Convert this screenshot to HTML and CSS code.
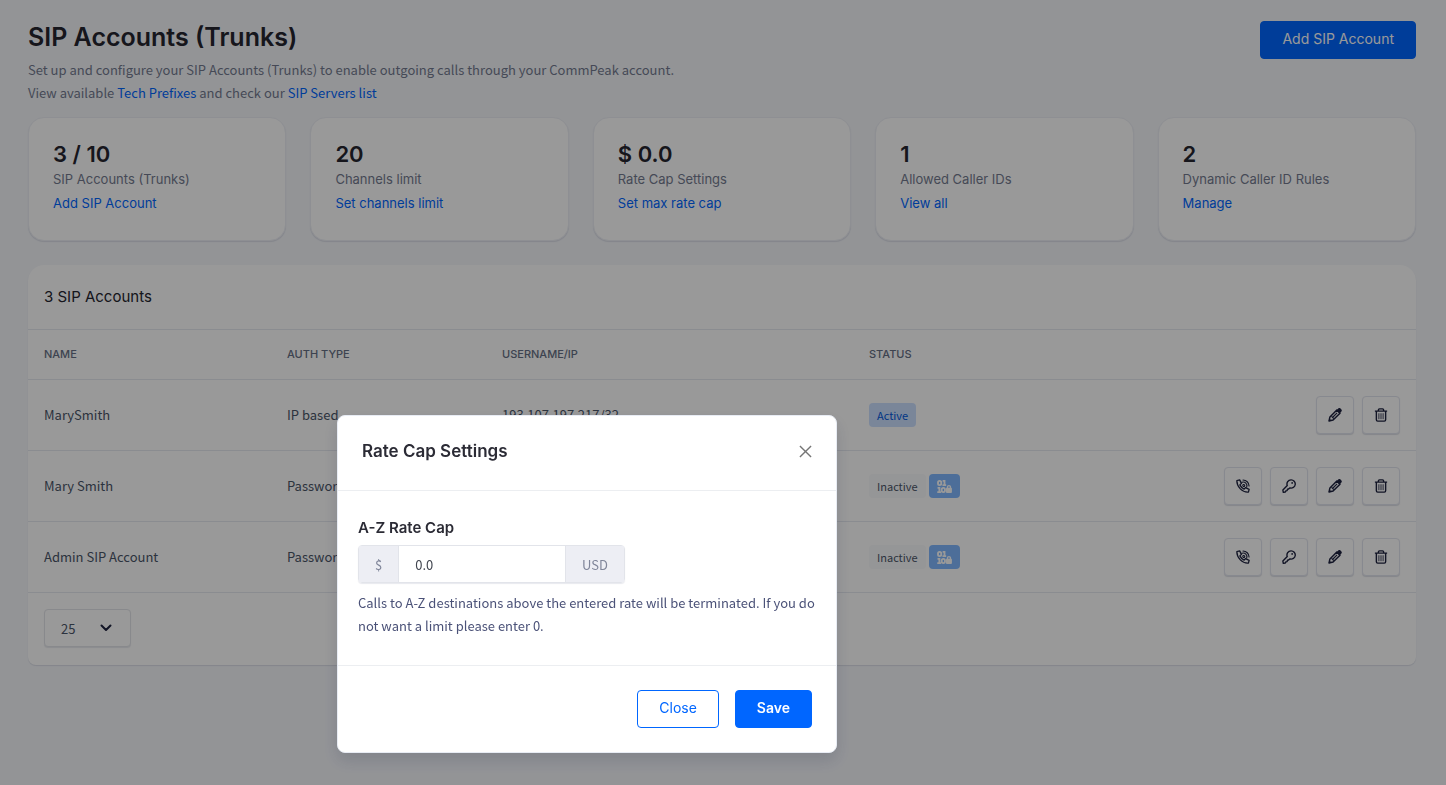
FILE: index.html
```html
<!DOCTYPE html>
<html lang="en">
  <head>
    <meta charset="UTF-8" />
    <meta name="viewport" content="width=device-width, initial-scale=1.0" />
    <title>SIP Accounts (Trunks)</title>
    <link rel="stylesheet" href="styles.css" />
  </head>
  <body>
    <!-- icons -->
    <svg class="sprite" aria-hidden="true">
      <symbol id="icon-pencil" viewBox="0 0 16 16">
        <path d="M1.2 14.8l1-4.6 7.9-7.9 3.6 3.6-7.9 7.9z" fill="none" stroke="currentColor" stroke-width="1.7" stroke-linejoin="round" />
        <path d="M9.6 2.6L11.2 1a2.4 2.4 0 0 1 3.6 0 2.4 2.4 0 0 1 0 3.6l-1.6 1.8z" fill="currentColor" />
        <path d="M.8 15.2l.8-3.2 2.4 2.4z" fill="currentColor" />
        <path d="M5.4 10.6l5-5M4 9.5l2.6 2.6" fill="none" stroke="currentColor" stroke-width="1.3" />
      </symbol>
      <symbol id="icon-trash" viewBox="0 0 16 16">
        <path d="M1 3.6h14M5 3.4V2.2C5 1.5 5.5 1 6.2 1h3.6c.7 0 1.2.5 1.2 1.2v1.2M2.7 3.8v9.7c0 .9.6 1.5 1.5 1.5h7.6c.9 0 1.5-.6 1.5-1.5V3.800" fill="none" stroke="currentColor" stroke-width="1.6" />
        <path d="M5.6 6v6.8M8 6v6.8M10.4 6v6.8" stroke="currentColor" stroke-width="1" />
      </symbol>
      <symbol id="icon-key" viewBox="0 0 16 16">
        <path d="M10.3 1a4.7 4.7 0 1 1-1.2 9.2l-1.6 1.2-1.200.3-.5 1.500-1.400.4-.6 1.300-2.300.3L1 12.600l5-5.200A4.700 4.700 0 0 1 10.300 1z" fill="none" stroke="currentColor" stroke-width="1.6" stroke-linejoin="round" />
        <circle cx="11.6" cy="4.500" r="1" fill="currentColor" />
      </symbol>
      <symbol id="icon-phone" viewBox="0 0 16 16">
        <path d="M1 1.8L4.2 1l2 4-1.8 1.700a11 11 0 0 0 4.900 4.900l1.700-1.800 4 2-.8 3.200C7.400 15.600.7 9 1 1.800z" fill="none" stroke="currentColor" stroke-width="1.5" stroke-linejoin="round" />
        <path d="M8 1.100a7 7 0 0 1 6.900 6.900M6.900 3.800c3-1.300 6.800 2 5.300 5.300M8.500 8.500c-1.600-.9-.4-3 1-2 1.100.8.200 2.500-1 2z" fill="none" stroke="currentColor" stroke-width="1.3" stroke-linecap="round" />
      </symbol>
      <symbol id="icon-binary" viewBox="0 0 16 14">
        <g fill="none" stroke="currentColor" stroke-width="2">
          <rect x="1" y="1" width="3.5" height="4.5" rx="1.7" />
          <rect x="5" y="8.5" width="3.5" height="4.500" rx="1.7" />
          <path d="M6 1h2v4M5.800 5.500h4M.5 8.500h2v4M.2 13h4" />
          <path d="M11.200 9V7.600a1.600 1.600 0 0 1 3.200 0V9" stroke-width="1.500" />
        </g>
        <rect x="9.600" y="8.300" width="6.400" height="5.700" rx="1" fill="currentColor" />
      </symbol>
      <symbol id="icon-close" viewBox="0 0 14 14">
        <path d="M1 1l12 12M13 1L1 13" stroke="currentColor" stroke-width="1.5" />
      </symbol>
      <symbol id="icon-chevron" viewBox="0 0 12 8">
        <path d="M1.5 1.5L6 6l4.5-4.5" fill="none" stroke="currentColor" stroke-width="2" stroke-linecap="round" stroke-linejoin="round" />
      </symbol>
    </svg>

    <main class="page">
      <header class="page-header">
        <div>
          <h1 class="page-title">SIP Accounts (Trunks)</h1>
          <p class="page-text">Set up and configure your SIP Accounts (Trunks) to enable outgoing calls through your CommPeak account.</p>
          <p class="page-text">View available <a href="#">Tech Prefixes</a> and check our <a href="#">SIP Servers list</a></p>
        </div>
        <button type="button" class="btn btn-primary">Add SIP Account</button>
      </header>

      <section class="stats">
        <div class="stat">
          <div class="stat-value">3 / 10</div>
          <div class="stat-label">SIP Accounts (Trunks)</div>
          <a href="#" class="stat-link">Add SIP Account</a>
        </div>
        <div class="stat">
          <div class="stat-value">20</div>
          <div class="stat-label">Channels limit</div>
          <a href="#" class="stat-link">Set channels limit</a>
        </div>
        <div class="stat">
          <div class="stat-value">$ 0.0</div>
          <div class="stat-label">Rate Cap Settings</div>
          <a href="#" class="stat-link">Set max rate cap</a>
        </div>
        <div class="stat">
          <div class="stat-value">1</div>
          <div class="stat-label">Allowed Caller IDs</div>
          <a href="#" class="stat-link">View all</a>
        </div>
        <div class="stat">
          <div class="stat-value">2</div>
          <div class="stat-label">Dynamic Caller ID Rules</div>
          <a href="#" class="stat-link">Manage</a>
        </div>
      </section>

      <section class="panel">
        <h2 class="panel-title">3 SIP Accounts</h2>
        <table class="accounts">
          <thead>
            <tr>
              <th class="col-name">NAME</th>
              <th class="col-auth">AUTH TYPE</th>
              <th class="col-user">USERNAME/IP</th>
              <th>STATUS</th>
              <th></th>
            </tr>
          </thead>
          <tbody>
            <tr>
              <td>MarySmith</td>
              <td>IP based</td>
              <td>193.107.197.217/32</td>
              <td>
                <div class="badges">
                  <span class="badge badge-active">Active</span>
                </div>
              </td>
              <td>
                <div class="actions">
                  <button type="button" class="icon-btn" aria-label="Edit"><svg><use href="#icon-pencil" /></svg></button>
                  <button type="button" class="icon-btn" aria-label="Delete"><svg><use href="#icon-trash" /></svg></button>
                </div>
              </td>
            </tr>
            <tr>
              <td>Mary Smith</td>
              <td>Password</td>
              <td></td>
              <td>
                <div class="badges">
                  <span class="badge">Inactive</span>
                  <span class="badge badge-binary"><svg><use href="#icon-binary" /></svg></span>
                </div>
              </td>
              <td>
                <div class="actions">
                  <button type="button" class="icon-btn" aria-label="Call"><svg><use href="#icon-phone" /></svg></button>
                  <button type="button" class="icon-btn" aria-label="Password"><svg><use href="#icon-key" /></svg></button>
                  <button type="button" class="icon-btn" aria-label="Edit"><svg><use href="#icon-pencil" /></svg></button>
                  <button type="button" class="icon-btn" aria-label="Delete"><svg><use href="#icon-trash" /></svg></button>
                </div>
              </td>
            </tr>
            <tr>
              <td>Admin SIP Account</td>
              <td>Password</td>
              <td></td>
              <td>
                <div class="badges">
                  <span class="badge">Inactive</span>
                  <span class="badge badge-binary"><svg><use href="#icon-binary" /></svg></span>
                </div>
              </td>
              <td>
                <div class="actions">
                  <button type="button" class="icon-btn" aria-label="Call"><svg><use href="#icon-phone" /></svg></button>
                  <button type="button" class="icon-btn" aria-label="Password"><svg><use href="#icon-key" /></svg></button>
                  <button type="button" class="icon-btn" aria-label="Edit"><svg><use href="#icon-pencil" /></svg></button>
                  <button type="button" class="icon-btn" aria-label="Delete"><svg><use href="#icon-trash" /></svg></button>
                </div>
              </td>
            </tr>
          </tbody>
        </table>
        <div class="panel-footer">
          <div class="page-size">
            <select aria-label="Rows per page">
              <option>25</option>
              <option>50</option>
            </select>
            <svg class="chevron"><use href="#icon-chevron" /></svg>
          </div>
        </div>
      </section>
    </main>

    <div class="backdrop"></div>

    <form class="modal" role="dialog" aria-labelledby="modalTitle">
      <div class="modal-header">
        <h3 class="modal-title" id="modalTitle">Rate Cap Settings</h3>
        <button type="button" class="modal-close" aria-label="Close"><svg><use href="#icon-close" /></svg></button>
      </div>
      <div class="modal-body">
        <label class="field-label" for="rateCap">A-Z Rate Cap</label>
        <div class="input-group">
          <span class="addon">$</span>
          <input type="text" id="rateCap" name="rateCap" value="0.0" />
          <span class="addon addon-end">USD</span>
        </div>
        <p class="help">Calls to A-Z destinations above the entered rate will be terminated. If you do not want a limit please enter 0.</p>
      </div>
      <div class="modal-footer">
        <button type="button" class="btn btn-outline">Close</button>
        <button type="submit" class="btn btn-primary btn-save">Save</button>
      </div>
    </form>
  </body>
</html>
```
FILE: styles.css
```css
* {
  box-sizing: border-box;
}

body {
  margin: 0;
  font-family: "Noto Sans CJK SC", "Open Sans", sans-serif;
  font-size: 13px;
  line-height: 23px;
  color: #4a5568;
  background-color: #f5f7fb;
}

h1, h2, h3, p {
  margin: 0;
}

a {
  color: #0066ff;
  text-decoration: none;
}

.sprite {
  display: none;
}

.page {
  padding: 18px 30px 18px 28px;
}

.page-header {
  display: flex;
  justify-content: space-between;
  align-items: flex-start;
  padding-top: 3px;
  margin-bottom: 13px;
}

.page-title {
  font-family: Inter, sans-serif;
  font-size: 25px;
  font-weight: 600;
  line-height: 32px;
  margin-bottom: 5px;
  color: #25252f;
}

.page-text {
  color: #747b90;
}

/* buttons */
.btn {
  height: 38px;
  padding: 0 21px 3px;
  font-family: Inter, sans-serif;
  font-size: 14px;
  border: 1px solid #0066ff;
  border-radius: 4px;
  cursor: pointer;
}

.btn-primary {
  background-color: #0066ff;
  color: #fff;
}

.btn-outline {
  background-color: #fff;
  color: #0066ff;
}

.btn-save {
  font-weight: 600;
}

/* stat cards */
.stats {
  display: grid;
  grid-template-columns: repeat(5, 1fr);
  gap: 24px;
  margin-bottom: 24px;
  font-family: Inter, sans-serif;
}

.stat {
  padding: 24px 24px 25px;
  background-color: #fff;
  border: 1px solid #edeff5;
  border-radius: 16px;
  box-shadow: 0 1px 1px rgba(30, 40, 90, 0.12);
}

.stat-value {
  font-size: 22px;
  font-weight: 600;
  line-height: 25px;
  color: #25252f;
}

.stat-label,
.stat-link {
  display: block;
  line-height: 24px;
}

.stat-label {
  color: #747b90;
}

/* accounts table */
.panel {
  background-color: #fff;
  border-radius: 16px 16px 8px 8px;
  box-shadow: 0 1px 1px rgba(30, 40, 90, 0.12);
}

.panel-title {
  padding: 20px 16px;
  font-family: Inter, sans-serif;
  font-size: 15px;
  font-weight: 400;
  line-height: 24px;
  color: #25252f;
}

.accounts {
  width: 100%;
  border-collapse: separate;
  border-spacing: 0;
  table-layout: fixed;
}

.accounts th {
  height: 50px;
  padding: 0 16px;
  font-family: Inter, sans-serif;
  font-size: 11px;
  font-weight: 500;
  text-align: left;
  color: #667085;
  border-top: 1px solid #e6e9f0;
}

.accounts td {
  height: 71px;
  padding: 0 16px;
  line-height: 24px;
  border-top: 1px solid #e6e9f0;
}

.col-name {
  width: 243px;
}

.col-auth {
  width: 215px;
}

.col-user {
  width: 367px;
}

.badges {
  display: flex;
  gap: 3px;
}

.badge {
  display: flex;
  align-items: center;
  height: 24px;
  padding: 0 8px;
  font-size: 11px;
  background-color: #f9fafc;
  border-radius: 4px;
}

.badge-active {
  background-color: #cce0ff;
  color: #0057dd;
}

.badge-binary {
  background-color: #80b8ff;
  color: #fff;
}

.badge-binary svg {
  width: 15px;
  height: 13px;
}

.actions {
  display: flex;
  justify-content: flex-end;
  gap: 8px;
}

.icon-btn {
  display: flex;
  align-items: center;
  justify-content: center;
  width: 38px;
  height: 38px;
  padding: 0;
  background-color: #fff;
  color: #1f2340;
  border: 1px solid #e2e5ef;
  border-radius: 4px;
  box-shadow: 0 1px 1px rgba(30, 40, 90, 0.15);
  cursor: pointer;
}

.icon-btn svg {
  width: 14px;
  height: 14px;
}

.panel-footer {
  padding: 16px 16px 18px;
  border-top: 1px solid #e6e9f0;
}

.page-size {
  position: relative;
  width: 87px;
}

.page-size select {
  display: block;
  width: 100%;
  height: 38px;
  padding: 0 16px;
  appearance: none;
  font: inherit;
  color: #4a5568;
  background-color: #fff;
  border: 1px solid #e3e5ea;
  border-radius: 4px;
  box-shadow: 0 1px 1px rgba(30, 40, 90, 0.1);
}

.chevron {
  position: absolute;
  top: 15px;
  right: 19px;
  width: 12px;
  height: 8px;
  color: #1f2340;
  pointer-events: none;
}

/* modal */
.backdrop {
  position: fixed;
  inset: 0;
  background-color: rgba(0, 0, 0, 0.4);
}

.modal {
  position: fixed;
  top: 415px;
  left: 337px;
  width: 500px;
  background-color: #fff;
  border: 1px solid #e8ecf4;
  border-radius: 8px;
  box-shadow: 0 8px 16px rgba(30, 35, 70, 0.15);
}

.modal-header {
  display: flex;
  justify-content: space-between;
  align-items: center;
  height: 75px;
  padding: 0 24px 3px;
  border-bottom: 1px solid #eceef1;
}

.modal-title {
  font-family: Inter, sans-serif;
  font-size: 17px;
  font-weight: 600;
  color: #2b2b35;
}

.modal-close {
  display: flex;
  padding: 0;
  background: none;
  border: none;
  color: #757575;
  cursor: pointer;
}

.modal-close svg {
  width: 13px;
  height: 13px;
}

.modal-body {
  padding: 28px 20px;
}

.field-label {
  display: block;
  margin-bottom: 8px;
  font-family: Inter, sans-serif;
  font-size: 15px;
  font-weight: 600;
  line-height: 18px;
  color: #2b2b35;
}

.input-group {
  display: flex;
  width: 267px;
  height: 38px;
  margin-bottom: 8px;
  border: 1px solid #e2e4ea;
  border-radius: 4px;
  box-shadow: 0 1px 1px rgba(30, 40, 90, 0.1);
}

.input-group input {
  flex: 1;
  min-width: 0;
  padding: 0 16px;
  font: inherit;
  color: #40454f;
  background-color: #fff;
  border: none;
  outline: none;
}

.addon {
  display: flex;
  align-items: center;
  padding: 0 16px;
  background-color: #edeef4;
  color: #80869a;
  border-right: 1px solid #e2e4ea;
}

.addon-end {
  border-right: none;
  border-left: 1px solid #e2e4ea;
}

.help {
  color: #4b5278;
}

.modal-footer {
  display: flex;
  justify-content: flex-end;
  gap: 16px;
  padding: 24px;
  border-top: 1px solid #eceef1;
}
```
